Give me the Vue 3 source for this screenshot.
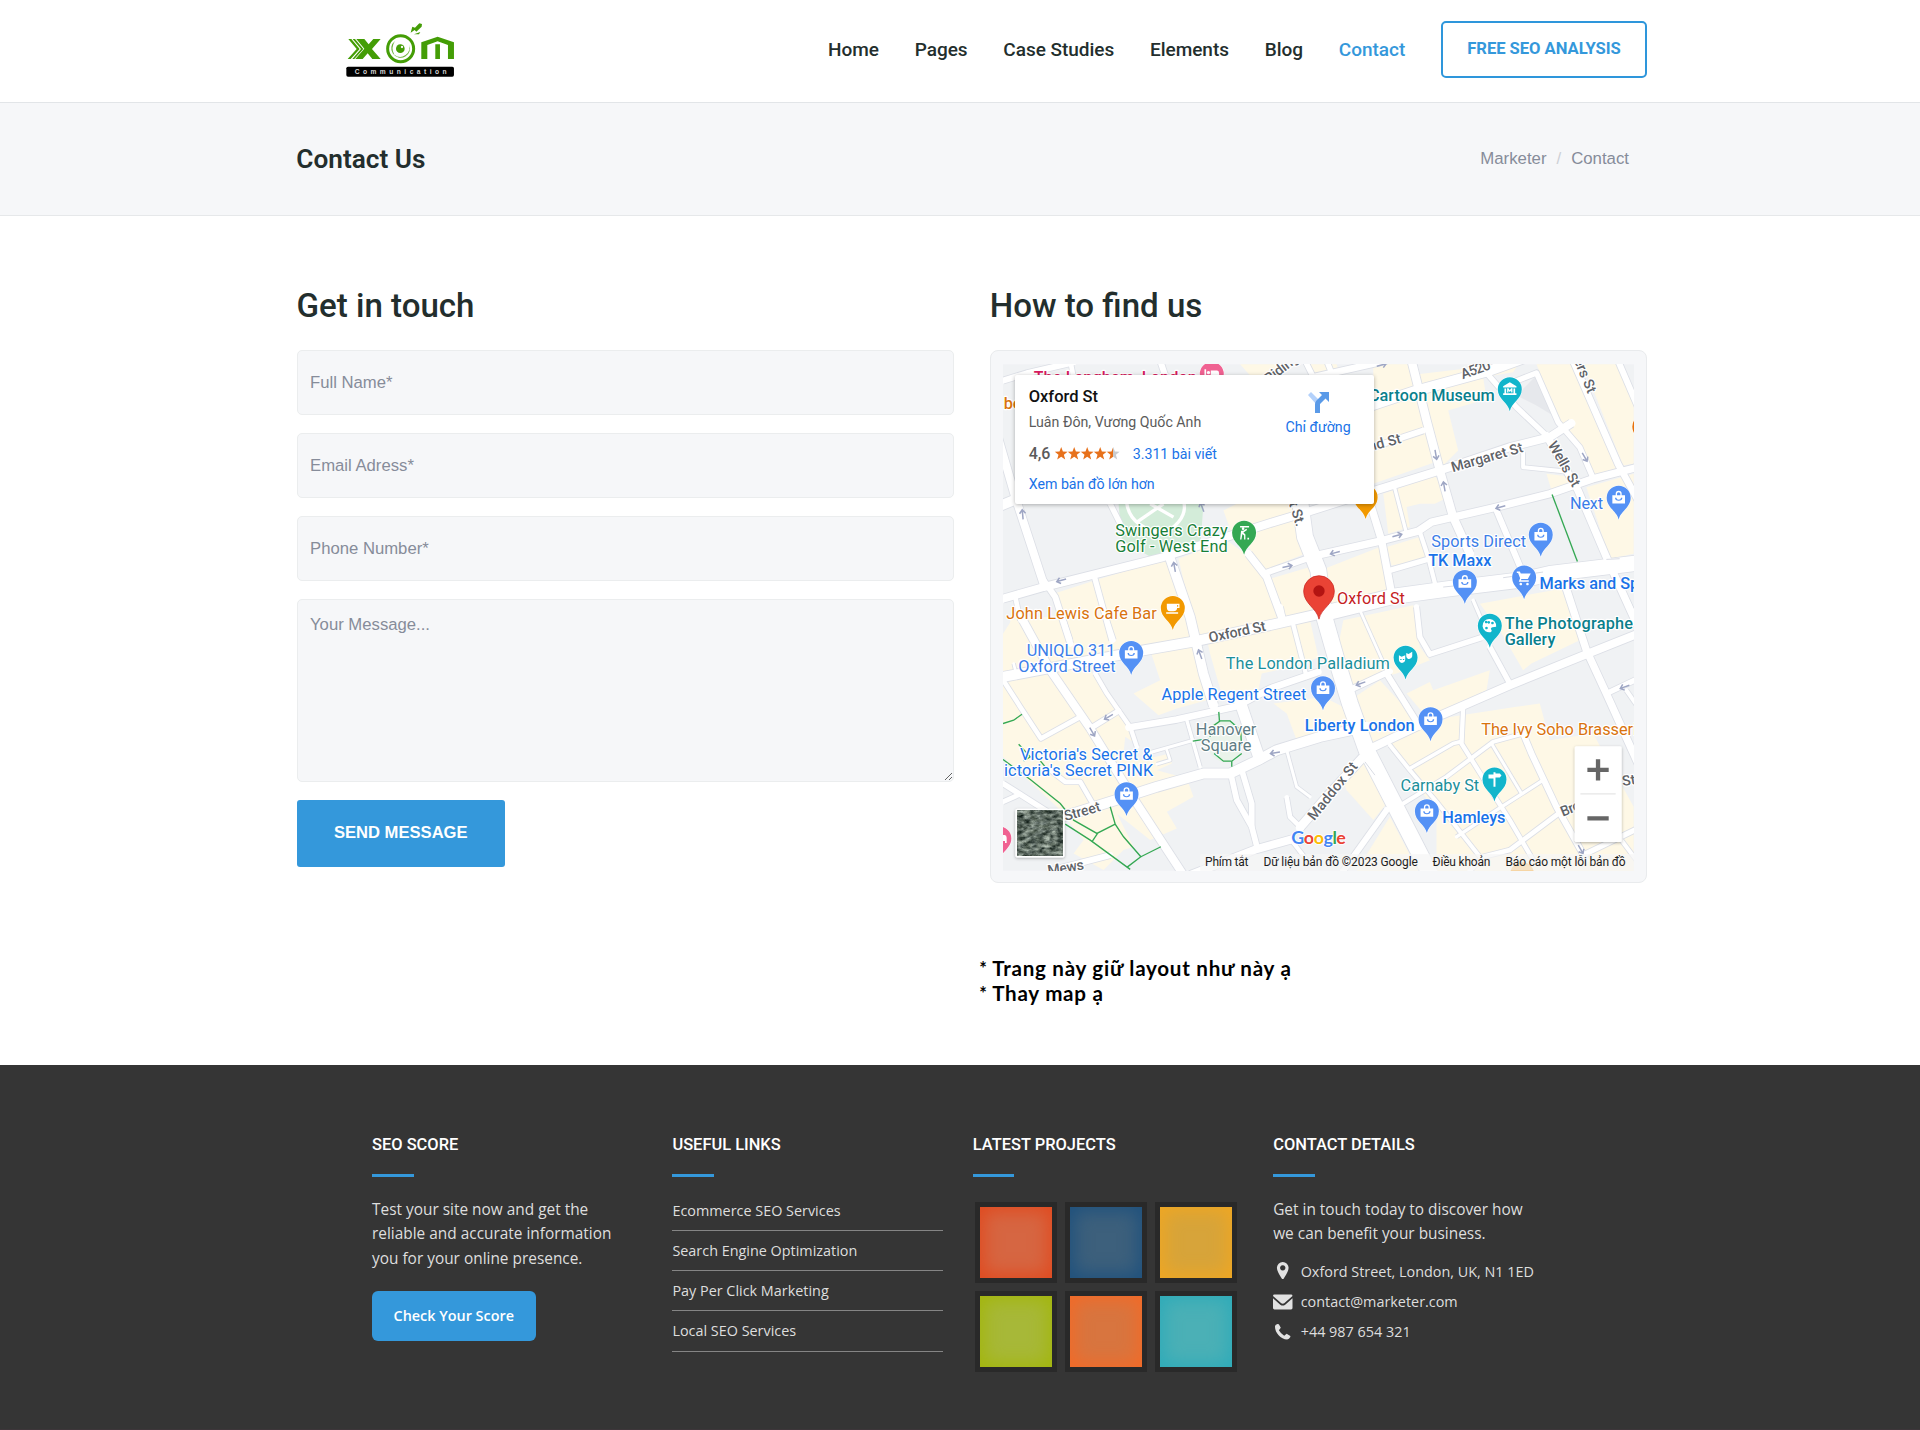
<script setup>
const nav = ['Home', 'Pages', 'Case Studies', 'Elements', 'Blog', 'Contact']
const fields = ['Full Name*', 'Email Adress*', 'Phone Number*']
const links = ['Ecommerce SEO Services', 'Search Engine Optimization', 'Pay Per Click Marketing', 'Local SEO Services']
const projects = [
  ['#d66642', '#e04a1f'], ['#3d607c', '#1f517d'], ['#d7a43a', '#f0a722'],
  ['#a7b838', '#a3b60c'], ['#d8753f', '#f36a27'], ['#4bb0b6', '#2eabb9'],
]

// Map geometry: three units per screen pixel
const cream = [
  '190,760 320,718 530,655 570,780 620,900 380,960 60,880 60,835 205,830',
  '565,655 710,600 780,650 850,740 870,845 620,890',
  '700,510 740,490 900,470 960,600 945,640 820,690 770,610 725,580',
  '840,715 960,680 990,800 890,840',
  '38,880 70,830 590,830 650,1080 560,1105 505,1125 430,1060 510,1020 470,900 300,990 420,1160 435,1210 405,1190 400,1240 450,1260 540,1240 545,1270 500,1290 590,1315 610,1370 530,1415 560,1465 480,1500 380,1420 430,1520 400,1530 340,1590 250,1540 280,1500 200,1400 38,1250',
  '640,850 960,840 985,950 945,970 815,1000 805,1050 700,1080 660,940',
  '850,1090 1000,1070 1080,1110 1110,1160 920,1200 890,1120',
  '960,71 1040,71 1050,105 960,120',
  '1150,71 1255,71 1335,365 1150,430',
  '1290,100 1590,65 1570,95 1480,110 1490,175 1375,210 1405,330 1355,380',
  '1640,71 1750,71 1890,380 1810,405 1780,330 1710,240',
  '1780,71 1885,71 1932,190 1932,370 1900,375',
  '1670,400 1755,410 1770,445 1690,465',
  '1790,440 1932,400 1932,640 1860,655',
  '1180,460 1335,405 1375,470 1335,490 1290,490 1250,500 1260,560 1195,580',
  '1190,620 1290,590 1320,655 1205,675',
  '990,690 1170,620 1200,750 1150,765 1000,800',
  '1060,840 1270,795 1290,920 1320,960 1220,1000 1070,1040 1040,940',
  '1470,790 1715,745 1770,900 1625,970 1600,990 1530,870',
  '1080,1080 1170,1020 1300,1160 1150,1215',
  '1250,1060 1320,1025 1330,1050 1500,990 1490,1050 1310,1130',
  '1200,1210 1380,1130 1575,1100 1650,1090 1680,1200 1810,1180 1932,1400 1932,1592 1340,1592 1340,1420',
  '1050,1300 1120,1270 1190,1390 1150,1440 1070,1350',
  '1200,1430 1285,1592 1100,1592',
  '750,71 880,71 840,105 780,105',
]
const roads = [
  ['38,120 110,98 250,65', 18], ['510,60 530,120', 18], ['240,60 250,110', 14], ['945,60 975,120', 16],
  ['20,280 75,470 160,730', 24], ['160,720 195,770 240,910', 18],
  ['75,770 90,840', 14], ['310,700 365,900', 16], ['360,490 390,550', 16],
  ['38,1010 460,930 620,902 860,850 1000,818', 30],
  ['20,500 80,475', 30],
  ['38,775 160,740 520,650 620,618 850,545 960,512 1150,452 1350,390 1560,320 1680,290 1745,248', 24],
  ['1150,320 1300,270', 18], ['960,112 1190,60', 20], ['1010,60 1030,110', 16],
  ['1100,210 1280,150 1500,90 1610,50', 30], ['1265,60 1310,240 1350,390 1390,530 1440,640', 25],
  ['1475,80 1580,200 1675,290', 16], ['1570,125 1640,97 1705,245 1770,320 1810,412', 16],
  ['1670,285 1765,450 1850,650 1945,860', 22], ['1750,60 1885,370 1945,480', 20], ['1885,60 1945,200', 18],
  ['1600,335 1600,380 1720,392', 12], ['980,645 1170,602 1285,572 1325,545 1390,530 1520,500 1680,460 1810,415 1945,380', 22],
  ['1135,470 1175,600 1205,760', 22], ['1215,445 1248,572', 10], ['1290,575 1315,650 1338,740', 13],
  ['1200,690 1320,655', 16], ['1520,510 1600,700', 18],
  ['1000,820 1210,768 1380,745 1600,718 1680,700 1945,668', 46],
  ['1280,800 1290,890 1320,942 1475,892', 16], ['1450,780 1480,850', 10],
  ['1725,730 1790,930 1850,1060 1945,1270', 22], ['1870,700 1945,850', 16],
  ['1500,920 1560,1030', 16], ['1120,1235 1290,1155 1360,1122 1560,1035 1790,942 1945,880', 24],
  ['1060,1058 1200,993', 18], ['1190,1000 1240,1080 1290,1160', 18], ['1110,810 1195,1000', 8],
  ['1850,1060 1945,1015', 16], ['1910,1050 1945,1100', 12],
  ['200,1435 370,1382 500,1340 640,1300 720,1300 800,1262 860,1230 990,1190 1130,1160', 30],
  ['1120,1250 1010,1370 930,1462', 26], ['600,1605 800,1527 905,1498', 24], ['1190,1410 1060,1592', 18],
  ['722,1300 740,1380 785,1460 802,1525', 17], ['755,1290 785,1390 785,1460', 17],
  ['890,1372 900,1430 935,1465', 14], ['900,1495 950,1560', 12],
  ['535,640 600,830 640,1000 670,1095', 28], ['750,1085 808,1255', 34],
  ['415,1162 560,1138 740,1098 840,1045 985,995', 20], ['910,855 950,1010', 13],
  ['775,640 830,710 878,840', 22], ['820,700 950,655', 18], ['870,800 880,845', 18],
  ['95,835 180,990 300,1165 430,1375 580,1605', 24], ['220,840 240,900', 14], ['350,840 370,900', 14],
  ['315,1000 350,1060 420,1160 440,1220', 13], ['300,1165 385,1112', 16],
  ['42,1025 90,1100 152,1195 270,1130', 14], ['590,1140 630,1280', 10], ['470,1240 610,1200', 9], ['530,1230 540,1260 500,1272', 8],
  ['180,1290 225,1325 270,1325 310,1395', 14], ['38,1385 90,1362', 14], ['38,1330 180,1420', 16], ['180,1592 360,1545', 18],
  ['1200,1215 1260,1290 1340,1385 1470,1550', 12], ['1260,1285 1390,1210 1410,1205', 11],
  ['1420,1100 1415,1210 1490,1330 1560,1440 1630,1560', 13], ['1240,1390 1370,1310 1510,1205 1600,1180', 12],
  ['1600,1180 1625,1240 1700,1400 1790,1560', 18], ['1505,1210 1595,1360', 9], ['1400,1490 1520,1410 1660,1320', 10],
  ['1440,1592 1480,1550 1560,1530 1640,1470 1720,1410', 14], ['1780,1545 1945,1465', 16], ['1895,1500 1940,1560', 12],
  ['890,1230 920,1340 960,1370', 9], ['70,970 80,1010', 8],
  ['930,480 945,590 985,690 1003,830 1040,960 1080,1090 1130,1230 1320,1600', 48],
]
const paths = [
  '38,1150 70,1140 95,1122', '38,1258 120,1318 210,1390 250,1440 320,1480 375,1452', '85,1212 120,1250 100,1262', '150,1262 165,1280',
  '225,1452 300,1500 420,1588', '305,1505 322,1480', '360,1400 375,1452 400,1490 452,1550 410,1582', '452,1550 512,1520',
  '686,1115 688,1142', '608,1203 655,1195', '672,1240 700,1263 725,1263 755,1240', '725,1263 725,1280',
  '660,1190 665,1160 690,1142 720,1142 752,1170 754,1215', '1687,462 1763,663',
]
const arrows = [
  [97, 522, -95], [213, 720, 165], [553, 680, -100], [892, 678, -12], [1338, 343, 80], [1363, 438, -100], [1785, 350, 60],
  [1532, 500, 165], [1222, 585, -15], [1035, 637, 165], [636, 500, -110], [630, 942, -110], [355, 1130, 150], [306, 1175, 60],
  [855, 1238, 170], [1112, 1030, 160], [1905, 1040, 160], [1773, 1528, 60], [1175, 73, -15],
]
const C = { blue: '#1a73e8', teal: '#0a7f8c', green: '#188038', orange: '#d9730d', grey: '#5f6368' }
const labels = [
  [130, 127, 'The Langham, London', '#d81b60', 490, 500], [40, 206, 'be', C.orange, 0, 500],
  [1137, 180, 'Cartoon Museum', C.teal, 378, 500], [1041, 791, 'Oxford St', '#c5221f', 204, 400],
  [1741, 507, 'Next', '#3b7de8', 99, 400], [1324, 619, 'Sports Direct', '#3b7de8', 285, 400],
  [1315, 676, 'TK Maxx', C.blue, 190, 500], [1649, 745, 'Marks and Spencer', C.blue, 0, 500],
  [1545, 865, 'The Photographe', C.teal, 385, 500], [1545, 915, 'Gallery', C.teal, 152, 500],
  [109, 947, 'UNIQLO 311', '#3b7de8', 267, 400], [84, 996, 'Oxford Street', '#3b7de8', 292, 400],
  [514, 1079, 'Apple Regent Street', C.blue, 435, 400], [707, 986, 'The London Palladium', '#1c8f9a', 493, 400],
  [944, 1171, 'Liberty London', C.blue, 330, 500], [1357, 1448, 'Hamleys', C.blue, 190, 500],
  [1232, 1352, 'Carnaby St', '#1c8f9a', 236, 400], [1474, 1183, 'The Ivy Soho Brasserie', C.orange, 0, 400],
  [89, 1260, "Victoria's Secret &", C.blue, 398, 400], [41, 1309, "ictoria's Secret PINK", C.blue, 448, 400],
  [48, 837, 'John Lewis Cafe Bar', C.orange, 452, 400], [375, 587, 'Swingers Crazy', C.green, 338, 400],
  [375, 635, 'Golf - West End', C.green, 338, 400], [617, 1183, 'Hanover', '#607d85', 182, 400], [632, 1233, 'Square', '#607d85', 152, 400],
]
const streets = [
  [741, 874, -12, 'Oxford St', 174], [1491, 350, -16, 'Margaret St', 222], [1184, 305, -15, 'nd St', 100], [1457, 86, -20, 'A520', 92],
  [1724, 370, 60, 'Wells St', 150], [1787, 104, 67, 'ers St', 110], [1027, 1352, -51, 'Maddox St', 210], [275, 1413, -16, 'Street', 112],
  [226, 1582, -10, 'Mews', 110], [1742, 1404, -22, 'Bro', 62], [1917, 1320, -8, 'St', 40], [922, 520, 72, 't St.', 76], [874, 82, -38, 'Riding', 118],
]
const pins = [
  [1560, 146, '#12b5cb', 'museum'], [762, 577, '#34a853', 'golf'], [548, 803, '#f29900', 'cup'], [1887, 472, '#5491f5', 'bag'],
  [1653, 583, '#5491f5', 'bag'], [1425, 725, '#5491f5', 'bag'], [1603, 711, '#5491f5', 'cart'], [423, 938, '#5491f5', 'bag'],
  [999, 1044, '#5491f5', 'bag'], [1247, 952, '#12b5cb', 'masks'], [1500, 856, '#12b5cb', 'palette'], [1322, 1137, '#5491f5', 'bag'],
  [1514, 1318, '#12b5cb', 'sign'], [1311, 1413, '#5491f5', 'bag'], [409, 1362, '#5491f5', 'bag'], [1127, 470, '#f29900', ''],
  [665, 100, '#f06292', 'bed'], [27, 1495, '#f06292', 'bed'], [1597, 1602, '#f6b04a', ''], [1964, 258, '#e8710a', ''],
]
const pinPath = 'M0 66C-5 40-36 30-36 0A36 36 0 1 1 36 0C36 30 5 40 0 66Z'
const glyphs = {
  bag: 'M-19-8H-9V-12A9 9 0 0 1 9-12V-8H19V17H-19ZM-5-8H5V-12A5 5 0 0 0-5-12ZM-11 0A11 9 0 0 0 11 0H7A7 6 0 0 1-7 0Z',
  cart: 'M-22-18H-13L-10-12H20L11 5H-8L-10 9H14V13H-16L-12 3-18-13H-22ZM-10 16a4 4 0 1 0 .1 0ZM10 16a4 4 0 1 0 .1 0Z',
  cup: 'M-18-13H20V0H13Q12 10 2 10H-8Q-18 10-18-2ZM13-9V-4H16V-9ZM-20 13H16V17H-20Z',
  museum: 'M0-21L20-9V-5H-20V-9ZM-16-2H-11V12H11V-2H16V12H20V17H-20V12H-16ZM-8 10V-3H-4L0 3 4-3H8V10H4V4L0 8-4 4V10Z',
  golf: 'M-12-20H15V-16H-12ZM-7-12a4 4 0 1 0 8 0a4 4 0 1 0-8 0ZM-9-6H-3L7-12 9-8-2-1 4 5V20H0V8L-5 4-8 20H-12ZM10 15h5v5h-5Z',
  masks: 'M2-14L9-11 20-18V-4Q18 6 8 4L4 1 2-4ZM-20-7L-12-3-1-7V6Q-2 16-11 16-20 15-20 5ZM-16 4h4v3h-4ZM-8 4h4v3h-4Z',
  palette: 'M0-20A20 20 0 1 0 4 19Q8 14 3 9 5 3 19 3A20 20 0 0 0 0-20ZM-11-7a4 4 0 1 1 .1 0ZM-3-14a4 4 0 1 1-.1 0ZM8-12a4 4 0 1 1-.1 0ZM-10 3a4 4 0 1 1-.1 0Z',
  sign: 'M-3-22H3V-18H16L21-12 16-6H3V22H-3V-3H-18V-15H-3Z',
  bed: 'M-22-14H-17V3H-3V-10H16Q22-10 22-2V14H17V8H-17V14H-22ZM-10-9a5 5 0 1 0 .1 0Z',
}
const credits = [[645, 130, 'Phím tắt'], [820, 464, 'Dữ liệu bản đồ ©2023 Google'], [1328, 174, 'Điều khoản'], [1547, 361, 'Báo cáo một lỗi bản đồ']]
</script>

<template>
  <div class="page">
    <header class="topbar">
      <div class="wrap topbar-in">
        <svg class="logo" viewBox="198 70 325 162">
          <g fill="#449d06">
            <path d="M205 118h9l25 30-27 30h-9l27-30zM218 118h7l25 30-27 30h-6l26-30z" />
            <path d="M229 118h24l13 16 14-16h22l-26 30 26 30h-25l-14-17-15 17h-22l27-31z" />
            <circle cx="362" cy="147" r="39" fill="none" stroke="#449d06" stroke-width="9" />
            <path d="M345 124a28 28 0 1 0 42 10a28 28 0 0 1-44 31q-12-20 2-41z" opacity=".8" />
            <circle cx="361" cy="147" r="21" fill="#fff" />
            <circle cx="361" cy="147" r="13" />
            <circle cx="366" cy="142" r="3.5" fill="#fff" />
            <path d="M424 178v-50l49-17 49 17v50h-18v-42l-31-11-31 11v42zM466 134h14v44h-14z" />
            <path d="M392 99l5-18 8 3 13-13 8 2-1 8-16 15-5-5zM402 104l19-7-4 7z" />
          </g>
          <rect x="199" y="201" width="323" height="30" rx="5" />
          <text x="224" y="222" textLength="276" class="logo-sub">Communication</text>
        </svg>
        <nav class="nav">
          <a v-for="n in nav" :key="n" :class="{ on: n === 'Contact' }">{{ n }}</a>
          <a class="cta">FREE SEO ANALYSIS</a>
        </nav>
      </div>
    </header>

    <section class="band">
      <div class="wrap band-in">
        <h1>Contact Us</h1>
        <div class="crumbs"><span>Marketer</span><i>/</i><span>Contact</span></div>
      </div>
    </section>

    <main class="wrap main">
      <form class="col">
        <h2>Get in touch</h2>
        <input v-for="f in fields" :key="f" type="text" :placeholder="f" />
        <textarea placeholder="Your Message..."></textarea>
        <button type="button" class="send">SEND MESSAGE</button>
      </form>

      <div class="col">
        <h2>How to find us</h2>
        <div class="frame">
          <svg class="map" viewBox="38 71 1895 1521">
            <defs>
              <filter id="sat" x="0" y="0" width="1" height="1" color-interpolation-filters="sRGB">
                <feTurbulence type="fractalNoise" baseFrequency="0.05 0.09" numOctaves="4" seed="7" />
                <feColorMatrix values=".7 .5 0 0 -.22  .7 .5 0 0 -.17  .7 .45 0 0 -.18  0 0 0 0 1" />
              </filter>
              <filter id="soft" x="-20%" y="-20%" width="140%" height="140%"><feDropShadow dx="0" dy="3" stdDeviation="5" flood-opacity=".3" /></filter>
            </defs>
            <rect x="38" y="71" width="1895" height="1521" fill="#f0f2f4" />
            <polygon v-for="p in cream" :key="p" :points="p" fill="#fef8e6" />
            <path d="M1580 165L1640 105 1690 225 1640 195Z" fill="#e6e8ec" />
            <path d="M385 490H640L632 600 560 620 500 660 430 620 395 600Z" fill="#d3ecd9" />
            <path d="M410 490Q420 560 520 580Q590 540 582 490M440 545L520 490M480 490L550 530" fill="none" stroke="#fff" stroke-width="10" />
            <path d="M655 1160Q700 1120 750 1160V1240Q700 1290 660 1240Z" fill="#eaf3ea" />
            <g fill="none" stroke="#dcdfe6" stroke-linejoin="round">
              <polyline v-for="r in roads" :key="r[0]" :points="r[0]" :stroke-width="r[1] + 5" />
            </g>
            <g fill="none" stroke="#fff" stroke-linejoin="round" stroke-linecap="round">
              <polyline v-for="r in roads" :key="r[0]" :points="r[0]" :stroke-width="r[1]" />
            </g>
            <path d="M1125 1265L1155 1305M1360 740L1460 730M1540 712L1660 695M1850 657L1890 655" stroke="#d9dce4" stroke-width="3" />
            <g fill="none" stroke="#34a853" stroke-width="4"><polyline v-for="p in paths" :key="p" :points="p" /></g>
            <g fill="none" stroke="#9ea6c4" stroke-width="4.5">
              <path v-for="(a, i) in arrows" :key="i" :transform="`translate(${a[0]} ${a[1]}) rotate(${a[2]})`" d="M-15 0H13M3-9L14 0 3 9" />
            </g>
            <g class="street">
              <text v-for="s in streets" :key="s[3] + s[0]" :transform="`translate(${s[0]} ${s[1]}) rotate(${s[2]})`" y="15" :textLength="s[4]">{{ s[3] }}</text>
            </g>
            <g v-for="(p, i) in pins" :key="i" :transform="`translate(${p[0]} ${p[1]})`">
              <path :d="pinPath" :fill="p[2]" stroke="#fff" stroke-width="3" paint-order="stroke" />
              <path v-if="p[3]" :d="glyphs[p[3]]" fill="#fff" fill-rule="evenodd" />
            </g>
            <g class="poi">
              <text v-for="l in labels" :key="l[2] + l[0]" :x="l[0]" :y="l[1]" :fill="l[3]" :font-weight="l[5]" :textLength="l[4] || undefined">{{ l[2] }}</text>
            </g>
            <g transform="translate(987 752)">
              <path transform="scale(1.28)" :d="pinPath" fill="#ea4335" stroke="#c5221f" stroke-width="1.6" />
              <circle r="17" fill="#b31412" />
            </g>
            <rect x="630" y="1542" width="1303" height="50" fill="#f5f5f5" fill-opacity=".72" />
            <text x="904" y="1513" class="google" textLength="164"><tspan fill="#4285f4">G</tspan><tspan fill="#ea4335">o</tspan><tspan fill="#fbbc04">o</tspan><tspan fill="#4285f4">g</tspan><tspan fill="#34a853">l</tspan><tspan fill="#ea4335">e</tspan></text>
            <g class="credit">
              <text v-for="c in credits" :key="c[2]" :x="c[0]" y="1577" :textLength="c[1]">{{ c[2] }}</text>
            </g>
            <rect x="75" y="1406" width="148" height="146" rx="6" fill="#fff" filter="url(#soft)" />
            <rect x="82" y="1412" width="134" height="134" filter="url(#sat)" />
            <rect x="1755" y="1218" width="141" height="288" rx="5" fill="#fff" filter="url(#soft)" />
            <path d="M1772 1361H1878" stroke="#e6e6e6" stroke-width="4" />
            <path d="M1793 1289H1857M1825 1257V1321M1793 1435H1857" stroke="#666" stroke-width="13" />
          </svg>

          <div class="place">
            <div class="place-info">
              <strong>Oxford St</strong>
              <span class="addr">Luân Đôn, Vương Quốc Anh</span>
              <div class="rating">
                <b>4,6</b>
                <svg class="stars" viewBox="0 0 65 13">
                  <defs><linearGradient id="half"><stop offset=".5" stop-color="#e7711b" /><stop offset=".5" stop-color="#c9cbce" /></linearGradient></defs>
                  <path v-for="i in 5" :key="i" :transform="`translate(${(i - 1) * 13} 0)`" :fill="i === 5 ? 'url(#half)' : '#e7711b'" d="M6.200 0L7.900 4.500 12.600 4.700 8.900 7.700 10.200 12.400 6.200 9.700 2.200 12.400 3.500 7.700-.2 4.700 4.500 4.500Z" />
                </svg>
                <a>3.311 bài viết</a>
              </div>
              <a class="larger">Xem bản đồ lớn hơn</a>
            </div>
            <a class="directions">
              <svg viewBox="0 0 22 22">
                <path d="M1 4L4 1 12 9 9 13Z" fill="#b3d1fb" />
                <path d="M8 22V13Q8 11 9.500 9.500L15 4 12 1H22V11L18.500 7.500 13 13V22Z" fill="#5a9ae8" />
              </svg>
              Chỉ đường
            </a>
          </div>
        </div>
        <div class="note">
          <p><i>*</i><span>Trang này giữ layout như này ạ</span></p>
          <p><i>*</i><span>Thay map ạ</span></p>
        </div>
      </div>
    </main>

    <footer class="footer">
      <div class="foot-in">
        <section>
          <h3>SEO SCORE</h3>
          <p class="copy">Test your site now and get the<br />reliable and accurate information<br />you for your online presence.</p>
          <a class="check">Check Your Score</a>
        </section>
        <section>
          <h3>USEFUL LINKS</h3>
          <ul class="links"><li v-for="l in links" :key="l">{{ l }}</li></ul>
        </section>
        <section>
          <h3>LATEST PROJECTS</h3>
          <div class="tiles">
            <div v-for="p in projects" :key="p[0]" class="tile" :style="{ backgroundColor: p[0], '--edge': p[1] }"></div>
          </div>
        </section>
        <section>
          <h3>CONTACT DETAILS</h3>
          <p class="copy">Get in touch today to discover how<br />we can benefit your business.</p>
          <ul class="details">
            <li>
              <svg viewBox="0 0 20 20"><path fill-rule="evenodd" d="M10 1a6 6 0 0 1 6 6C16 11 12.500 15 10.700 18.500H9.300C7.500 15 4 11 4 7A6 6 0 0 1 10 1ZM10 4.300a2.700 2.700 0 1 0 .01 0Z" /></svg>
              Oxford Street, London, UK, N1 1ED
            </li>
            <li>
              <svg viewBox="0 0 20 20"><path d="M0 4Q0 2.500 1.500 2.500H18.500Q20 2.500 20 4L11.500 11.500Q10 12.500 8.500 11.500ZM0 6.500L7.500 13Q10 14.800 12.500 13L20 6.500V16.500Q20 18 18.500 18H1.500Q0 18 0 16.500Z" /></svg>
              contact@marketer.com
            </li>
            <li>
              <svg viewBox="0 0 20 20"><path d="M2 4.500Q2 3 4.500 2L6 2.200 8 6 6 8.500Q8 12 11.500 14L14 12 17.800 14.300V15.500Q16.500 18 14.500 18C8 17.500 2 11 2 4.500Z" /></svg>
              +44 987 654 321
            </li>
          </ul>
        </section>
      </div>
    </footer>
  </div>
</template>

<style>
body { margin: 0; background: #fff; }
</style>

<style scoped>
* { box-sizing: border-box; }
.page { width: 1920px; height: 1430px; display: flex; flex-direction: column; font-family: "Liberation Sans", Arial, sans-serif; color: #232e2d; overflow: hidden; }
h1, h2, h3, p, ul { margin: 0; padding: 0; }
i { font-style: normal; }
.wrap { width: 1350.500px; margin-left: 296.500px; }

.topbar { height: 102px; flex: none; }
.topbar-in { display: flex; justify-content: space-between; padding-top: 21px; }
.logo { width: 108.3px; height: 54px; margin: 2.200px 0 0 49.500px; }
.logo-sub { font: bold 20px "Liberation Sans", Arial, sans-serif; fill: #d5d5d5; }
.nav { display: flex; align-items: center; gap: 35.800px; height: 57px; font: 500 19px "Roboto", sans-serif; letter-spacing: -.03px; color: #232e2d; }
.nav .on { color: #3498db; }
.nav .cta { width: 206px; height: 57px; line-height: 52px; text-align: center; border: 2px solid #2e96db; border-radius: 5px; color: #3498db; font-size: 16.600px; font-weight: 700; }

.band { height: 113.500px; flex: none; background: #f6f7f9; border-top: 1px solid #e2e5e8; border-bottom: 1px solid #e6e8ea; }
.band-in { height: 100%; display: flex; justify-content: space-between; align-items: center; }
.band h1 { font: 600 26.200px "Roboto", sans-serif; margin-left: -.2px; }
.crumbs { display: flex; font-size: 16.8px; color: #868c9a; padding: 1px 18px 0 0; }
.crumbs i { color: #cdd0d6; margin: 0 10px; }

.main { height: 849.500px; flex: none; display: flex; gap: 36px; padding-top: 69.500px; }
.col { width: 657.200px; }
.col h2 { font: 500 33.100px/40px "Roboto", sans-serif; padding-top: 1.200px; margin: 0 0 24px 0; }
input, textarea { display: block; width: 657px; margin: 0 0 18px; background: #f6f7f9; border: 1.200px solid #ebedee; border-radius: 5px; font: 16.700px "Liberation Sans", Arial, sans-serif; outline: none; }
input { height: 65px; padding: 0 12.500px; }
textarea { height: 183px; padding: 13px 12.500px; line-height: 24px; }
input::placeholder, textarea::placeholder { color: #868c9a; opacity: 1; }
.send { display: block; width: 208.500px; height: 66.500px; padding: 0; border: 0; border-radius: 3px; background: #3498db; color: #fff; font: bold 16.6px "Liberation Sans", Arial, sans-serif; }

.frame { position: relative; height: 532.500px; padding: 12.600px 12px; border: 1px solid #e9ebed; border-radius: 8px; background: #f6f7f9; }
.map { display: block; width: 631px; height: 507px; overflow: hidden; }
.street { font: 500 43px "Roboto", sans-serif; fill: #5f6368; stroke: #fff; stroke-width: 7; paint-order: stroke; text-anchor: middle; }
.poi { font-family: "Roboto", sans-serif; font-size: 49px; stroke: #fff; stroke-width: 7; stroke-linejoin: round; paint-order: stroke; }
.google { font: 700 54px "Lato", sans-serif; stroke: #fff; stroke-width: 5; paint-order: stroke; }
.credit { font: 36px "Roboto", sans-serif; fill: #1d1d1d; }

.place { position: absolute; left: 24px; top: 24px; width: 359px; height: 129px; display: flex; justify-content: space-between; padding: 12px 23px 0 14px; background: #fff; border-radius: 2px; box-shadow: 0 1px 4px rgba(0, 0, 0, .3); font: 14.2px "Roboto", sans-serif; }
.place-info { display: flex; flex-direction: column; }
.place strong { font-weight: 500; font-size: 16.500px; line-height: 20px; color: #111; }
.place a { color: #1a73e8; }
.addr { margin-top: 5px; line-height: 20px; color: #5b5b5b; }
.rating { display: flex; align-items: center; height: 20px; margin-top: 11.500px; }
.rating b { font-weight: 500; font-size: 16px; color: #5b5b5b; width: 26px; }
.stars { width: 65px; height: 13px; margin-right: 13px; overflow: visible; }
.larger { margin-top: 10px; line-height: 20px; }
.directions { display: flex; flex-direction: column; align-items: center; padding-top: 4px; line-height: 20px; }
.directions svg { width: 22px; height: 22px; margin-bottom: 3.500px; }

.note { margin-top: 73px; margin-left: -10.500px; font: 700 20.600px/25px "Lato", sans-serif; letter-spacing: .73px; color: #000; }
.note p { display: flex; }
.note i { width: 13px; font-size: 18px; }

.footer { flex: 1; background: #353535; border-bottom: 1px solid #3d363a; padding: 67.600px 0 0 372px; color: #dedede; font: 15.420px "Open Sans", sans-serif; }
.foot-in { display: grid; grid-template-columns: repeat(4, 300.4px); }
.footer h3 { font: 500 16.460px/24px "Roboto", sans-serif; color: #fff; display: flex; flex-direction: column; gap: 17.400px; margin-bottom: 20px; }
.footer h3::after { content: ""; width: 41.500px; height: 3px; background: #3498db; }
.copy { line-height: 24.67px; padding-top: .7px; }
.check { display: block; width: 163.500px; height: 49.500px; margin-top: 19.500px; border-radius: 6px; background: #3498db; color: #fff; font-weight: 600; font-size: 14.4px; line-height: 49px; text-align: center; }
ul { list-style: none; }
.links { width: 271px; margin-top: -5.800px; font-size: 14.4px; }
.links li { height: 40.100px; line-height: 39px; border-bottom: 1px solid #858585; }
.tiles { display: grid; grid-template-columns: repeat(3, 82px); gap: 7.500px 8px; padding: 5px 0 0 2.400px; }
.tile { height: 81.500px; border: 5px solid #292929; box-shadow: inset 0 0 18px 4px var(--edge); }
.details { margin-top: 9px; font-size: 14.4px; }
.details li { display: flex; align-items: center; gap: 8px; height: 30.300px; }
.details svg { width: 19.500px; height: 19.500px; fill: #e2e2e2; }
</style>
